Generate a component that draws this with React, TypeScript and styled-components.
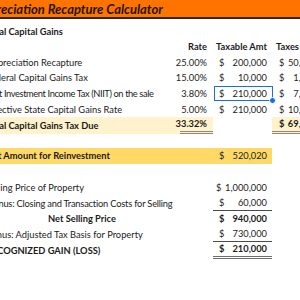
import React from 'react'
import styled, { createGlobalStyle } from 'styled-components'

const GlobalStyle = createGlobalStyle`
  html, body {
    margin: 0;
    padding: 0;
    background: #ffffff;
    overflow: hidden;
  }
`

// spacer col A | labels | rate | taxable amt | taxes
const COLS = '12px 196px 33px 59px 50px'

const Sheet = styled.div`
  width: 350px;
  margin-left: -28px;
  font-family: Lato, 'Noto Sans', sans-serif;
  font-size: 9.3px;
  color: #1b1b1b;
`

const TitleBar = styled.div`
  height: 17px;
  display: flex;
  align-items: center;
  padding-left: 2px;
  background: #ff7300;
  border-bottom: 2px solid #3a2410;
  font-size: 13px;
  font-weight: 700;
  font-style: italic;
  color: #24160a;
  white-space: nowrap;
`

const Row = styled.div<{ $h: number }>`
  display: grid;
  grid-template-columns: ${COLS};
  height: ${p => p.$h}px;
`

const Cell = styled.div<{
  $bold?: boolean
  $bg?: string
  $align?: 'left' | 'right' | 'center'
  $bottom?: boolean
  $line?: 'single' | 'double' | 'heavy'
  $squeeze?: number
}>`
  position: relative;
  display: flex;
  align-items: ${p => (p.$bottom ? 'flex-end' : 'center')};
  justify-content: ${p =>
    p.$align === 'right' ? 'flex-end' : p.$align === 'center' ? 'center' : 'flex-start'};
  padding: ${p => (p.$bottom ? '0 2px 2px' : '0 2px')};
  padding-left: ${p => (p.$squeeze ? 4 : 2)}px;
  white-space: nowrap;
  overflow: visible;
  letter-spacing: ${p => (p.$squeeze ? `-${p.$squeeze}px` : 'normal')};
  font-weight: ${p => (p.$bold ? 700 : 400)};
  background: ${p => p.$bg || 'transparent'};
  box-sizing: border-box;
  border-bottom: ${p =>
    p.$line === 'single'
      ? '1px solid #4a4a4a'
      : p.$line === 'double'
      ? '3px double #6e6e6e'
      : p.$line === 'heavy'
      ? '3px double #8a8a80'
      : 'none'};
`

const Pct = styled(Cell)`
  justify-content: flex-end;
  padding-right: 6px;
`

const Money = styled(Cell)<{ $pl?: number }>`
  justify-content: space-between;
  padding-left: ${p => p.$pl ?? 6}px;
  padding-right: 5px;
`

const HeaderCell = styled(Cell)<{ $pl?: number; $pr?: number }>`
  font-weight: 700;
  padding-left: ${p => p.$pl ?? 2}px;
  padding-right: ${p => p.$pr ?? 2}px;
`

const Selected = styled.div`
  position: absolute;
  inset: 0 -1px 0 1px;
  border: 1.5px solid #1a6fe0;
  pointer-events: none;

  &::after {
    content: '';
    position: absolute;
    right: -3.5px;
    bottom: -3.5px;
    width: 5px;
    height: 5px;
    border-radius: 50%;
    background: #1a6fe0;
    border: 1px solid #ffffff;
  }
`

const PALE = '#fff2cc'
const GOLD = '#ffd966'

type TaxRow = {
  label: string
  rate: string
  amt: string
  tax: string
  squeeze?: number
  selected?: boolean
}

const taxRows: TaxRow[] = [
  { label: 'Depreciation Recapture', rate: '25.00%', amt: '200,000', tax: '50,000' },
  { label: 'Federal Capital Gains Tax', rate: '15.00%', amt: '10,000', tax: '1,500' },
  {
    label: 'Net Investment Income Tax (NIIT) on the sale',
    rate: '3.80%',
    amt: '210,000',
    tax: '7,980',
    squeeze: 0.4,
    selected: true
  },
  { label: 'Effective State Capital Gains Rate', rate: '5.00%', amt: '210,000', tax: '10,500' }
]

function Dollars({ value }: { value: string }) {
  return (
    <>
      <span>$</span>
      <span>{value}</span>
    </>
  )
}

export default function App(): JSX.Element {
  return (
    <>
      <GlobalStyle />
      <Sheet>
        <TitleBar>Depreciation Recapture Calculator</TitleBar>

        <Row $h={20}>
          <Cell />
          <Cell $bold $bottom>Total Capital Gains</Cell>
        </Row>

        <Row $h={15.5}>
          <Cell />
          <Cell />
          <Pct $bold>Rate</Pct>
          <HeaderCell $align="right" $pr={5}>Taxable Amt</HeaderCell>
          <HeaderCell $pl={4}>Taxes</HeaderCell>
        </Row>

        {taxRows.map(r => (
          <Row $h={15.6} key={r.label}>
            <Cell />
            <Cell $squeeze={r.squeeze}>{r.label}</Cell>
            <Pct>{r.rate}</Pct>
            <Money>
              <Dollars value={r.amt} />
              {r.selected && <Selected />}
            </Money>
            <Money $pl={7}><Dollars value={r.tax} /></Money>
          </Row>
        ))}

        <Row $h={17}>
          <Cell />
          <Cell $bold $bg={PALE}>Total Capital Gains Tax Due</Cell>
          <Pct $bold $bg={PALE} $line="heavy">33.32%</Pct>
          <Cell />
          <Money $pl={7} $bold $bg={PALE} $line="heavy"><Dollars value="69,980" /></Money>
        </Row>

        <Row $h={14} />

        <Row $h={16}>
          <Cell />
          <Cell $bold $bg={GOLD}>Net Amount for Reinvestment</Cell>
          <Cell $bg={GOLD} />
          <Money $bg={GOLD}><Dollars value="520,020" /></Money>
        </Row>

        <Row $h={16} />

        <Row $h={16}>
          <Cell />
          <Cell>Selling Price of Property</Cell>
          <Cell />
          <Money $pl={3}><Dollars value="1,000,000" /></Money>
        </Row>

        <Row $h={15}>
          <Cell />
          <Cell $squeeze={0.2}>Minus: Closing and Transaction Costs for Selling</Cell>
          <Cell />
          <Money $line="single"><Dollars value="60,000" /></Money>
        </Row>

        <Row $h={16}>
          <Cell />
          <Cell $bold $align="center">Net Selling Price</Cell>
          <Cell />
          <Money $bold><Dollars value="940,000" /></Money>
        </Row>

        <Row $h={15}>
          <Cell />
          <Cell>Minus: Adjusted Tax Basis for Property</Cell>
          <Cell />
          <Money $line="single"><Dollars value="730,000" /></Money>
        </Row>

        <Row $h={17}>
          <Cell />
          <Cell $bold>RECOGNIZED GAIN (LOSS)</Cell>
          <Cell />
          <Money $bold $line="double"><Dollars value="210,000" /></Money>
        </Row>
      </Sheet>
    </>
  )
}
